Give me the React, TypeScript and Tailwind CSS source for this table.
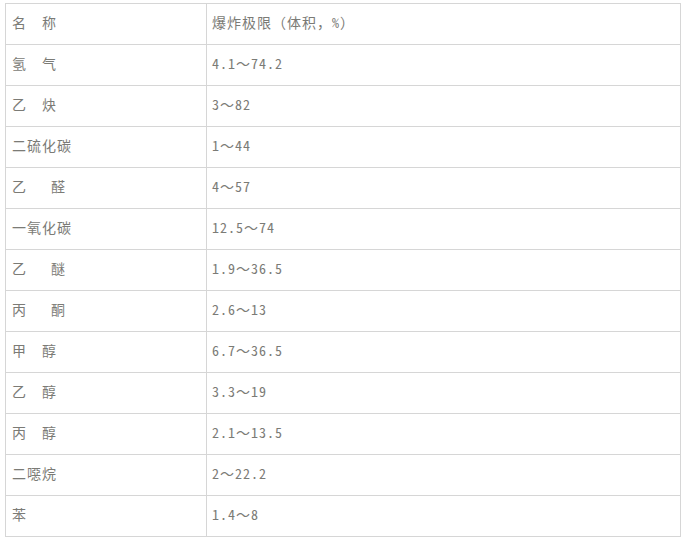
import React from 'react';

const rows: [string, string][] = [
  ['名\u3000称', '爆炸极限（体积，%）'],
  ['氢\u3000气', '4.1～74.2'],
  ['乙\u3000炔', '3～82'],
  ['二硫化碳', '1～44'],
  ['乙\u00a0\u00a0\u00a0醛', '4～57'],
  ['一氧化碳', '12.5～74'],
  ['乙\u00a0\u00a0\u00a0醚', '1.9～36.5'],
  ['丙\u00a0\u00a0\u00a0酮', '2.6～13'],
  ['甲\u3000醇', '6.7～36.5'],
  ['乙\u3000醇', '3.3～19'],
  ['丙\u3000醇', '2.1～13.5'],
  ['二噁烷', '2～22.2'],
  ['苯', '1.4～8'],
];

export default function App() {
  return (
    <div className="w-[687px] h-[542px] bg-white pt-[3px] pl-[5px]">
      <div
        className="w-[676px] border-l border-t border-[#d6d6d6] text-[14px] tracking-[1px] text-[#7b7b76]"
        style={{ fontFamily: '"Noto Sans Mono CJK SC", "Noto Sans CJK SC", sans-serif' }}
      >
        {rows.map(([name, range], i) => (
          <div key={i} className="flex h-[41px]">
            <div className="w-[201px] flex items-center pl-[6px] pb-[3px] border-r border-b border-[#d6d6d6] whitespace-pre">
              {name}
            </div>
            <div className="flex-1 flex items-center pl-[5px] pb-[3px] border-r border-b border-[#d6d6d6] whitespace-pre">
              {range}
            </div>
          </div>
        ))}
      </div>
    </div>
  );
}
